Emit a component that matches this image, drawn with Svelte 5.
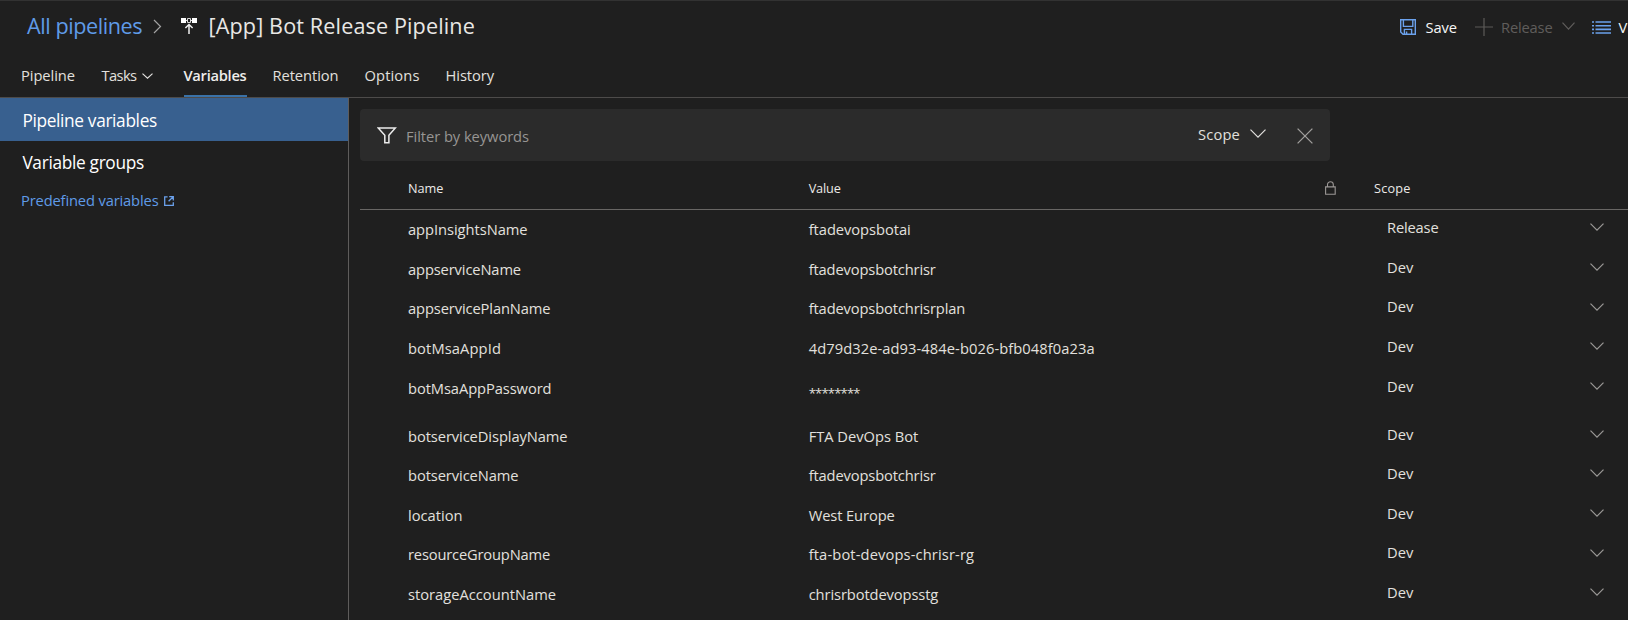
<script>
  const tabs = [
    { label: 'Pipeline', w: 54 },
    { label: 'Tasks', w: 35, menu: true },
    { label: 'Variables', w: 63, active: true },
    { label: 'Retention', w: 66 },
    { label: 'Options', w: 55 },
    { label: 'History', w: 48.5 }
  ];

  const rows = [
    { name: 'appInsightsName', nw: 119.5, value: 'ftadevopsbotai', vw: 102, scope: 'Release', sw: 51.5, h: 40, c: 0 },
    { name: 'appserviceName', nw: 113, value: 'ftadevopsbotchrisr', vw: 127, scope: 'Dev', sw: 26.5, h: 39, c: 0 },
    { name: 'appservicePlanName', nw: 142.5, value: 'ftadevopsbotchrisrplan', vw: 156.5, scope: 'Dev', sw: 26.5, h: 40, c: 1 },
    { name: 'botMsaAppId', nw: 93, value: '4d79d32e-ad93-484e-b026-bfb048f0a23a', vw: 286, scope: 'Dev', sw: 26.5, h: 40, c: 0 },
    { name: 'botMsaAppPassword', nw: 143.5, value: '********', vw: 51, scope: 'Dev', sw: 26.5, h: 48, c: 0, secret: true },
    { name: 'botserviceDisplayName', nw: 159.5, value: 'FTA DevOps Bot', vw: 109.5, scope: 'Dev', sw: 26.5, h: 39, c: 0 },
    { name: 'botserviceName', nw: 110.5, value: 'ftadevopsbotchrisr', vw: 127, scope: 'Dev', sw: 26.5, h: 40, c: 0 },
    { name: 'location', nw: 54.5, value: 'West Europe', vw: 86, scope: 'Dev', sw: 26.5, h: 39, c: 0 },
    { name: 'resourceGroupName', nw: 142, value: 'fta-bot-devops-chrisr-rg', vw: 165.5, scope: 'Dev', sw: 26.5, h: 40, c: 1 },
    { name: 'storageAccountName', nw: 148, value: 'chrisrbotdevopsstg', vw: 129.5, scope: 'Dev', sw: 26.5, h: 40, c: 0 }
  ];

  // Tracks the label so that it fills the given width.
  function fit(node, width) {
    const natural = node.getBoundingClientRect().width;
    node.style.letterSpacing = `${(width - natural) / node.textContent.length}px`;
  }
</script>

{#snippet chevron(w, h, cls)}
  <svg class={cls} width={w} height={h} viewBox="0 0 {w} {h}" fill="none" stroke="currentColor" stroke-width="1.2">
    <path d="M.5 .6 L{w / 2} {h - 0.9} L{w - 0.5} .6" />
  </svg>
{/snippet}

<div class="page">
  <header>
    <div class="crumbs">
      <a class="t" use:fit={115}>All pipelines</a>
      <svg class="sep" width="9" height="15" viewBox="0 0 9 15" fill="none" stroke="#a3a3a3" stroke-width="1.2"><path d="M1 1 L7.5 7.5 L1 14" /></svg>
      <svg class="rel" width="16" height="16" viewBox="0 0 16 16" fill="none">
        <path d="M0 0h5v5H0zM11 0h5v5h-5z" fill="#fff" />
        <path d="M6.5 .5h3v4h-3z" stroke="#dcdcdc" />
        <path d="M5 2.5h1.5M9.5 2.5H11" stroke="#dcdcdc" />
        <path d="M8 6.4V16M4.4 10 L8 6.5 L11.6 10" stroke="#f0f0f0" stroke-width="1.5" />
      </svg>
      <h1 class="t" use:fit={266.5}>[App] Bot Release Pipeline</h1>
    </div>
    <div class="actions">
      <svg class="save" width="16" height="16" viewBox="0 0 16 16" fill="none" stroke="#6ba1ec" stroke-width="1.4">
        <path d="M.7 .7H15.3V15.3H3L.7 13zM3.4 .7V7.4H12.8V.7M4.4 15V10.4H11.6V15M6.6 12.4V15" />
      </svg>
      <span class="t" use:fit={31.5}>Save</span>
      <svg class="plus" width="18" height="18" viewBox="0 0 18 18" stroke="#5c5a58" stroke-width="1.2"><path d="M9 0V18M0 9H18" /></svg>
      <span class="t off" use:fit={51.5}>Release</span>
      {@render chevron(13, 8, 'relchev')}
      <svg class="list" width="19" height="13" viewBox="0 0 19 13" stroke="#6ba1ec" stroke-width="1.6">
        <path d="M0 1H2M3.5 1H19M0 4.7H2M3.5 4.7H19M0 8.4H2M3.5 8.4H19M0 12H2M3.5 12H19" />
      </svg>
      <span class="t">View</span>
    </div>
  </header>

  <nav>
    {#each tabs as tab}
      <div class="tab" class:active={tab.active}>
        <span class="t" use:fit={tab.w}>{tab.label}</span>
        {#if tab.menu}{@render chevron(11, 6, 'tabchev')}{/if}
      </div>
    {/each}
  </nav>

  <div class="body">
    <aside>
      <div class="item selected"><span class="t" use:fit={134.5}>Pipeline variables</span></div>
      <div class="item"><span class="t" use:fit={121.5}>Variable groups</span></div>
      <div class="link">
        <a class="t" use:fit={137.5}>Predefined variables</a>
        <svg width="10" height="10" viewBox="0 0 10 10" fill="none" stroke="#6ba1ec" stroke-width="1.3">
          <path d="M3.6 .8H.7V9.3H9.3V6.2M5.2 .7H9.3V4.6M9.2 .8L4.6 5.2" />
        </svg>
      </div>
    </aside>

    <main>
      <div class="filter">
        <svg class="funnel" width="20" height="17" viewBox="0 0 20 17" fill="none" stroke="#ececec" stroke-width="1.5"><path d="M1.2 .9H18.3L11.9 8.2V15.8H7.8V8.2Z" /></svg>
        <span class="t hint" use:fit={123}>Filter by keywords</span>
        <span class="t scope" use:fit={42}>Scope</span>
        {@render chevron(16, 9, 'scopechev')}
        <svg class="close" width="16" height="16" viewBox="0 0 16 16" stroke="#a19f9d" stroke-width="1.3"><path d="M.6 .6L15.4 15.4M15.4 .6L.6 15.4" /></svg>
      </div>

      <div class="grid head">
        <div class="name"><span class="t" use:fit={35.5}>Name</span></div>
        <div class="value"><span class="t" use:fit={32}>Value</span></div>
        <svg class="lock" width="11" height="14" viewBox="0 0 11 14" fill="none" stroke="#9b9795" stroke-width="1.1"><path d="M.6 5.9H10.2V13.2H.6zM2.5 5.9V3.6A2.9 2.9 0 0 1 8.3 3.6V5.9" /></svg>
        <div><span class="t" use:fit={36.5}>Scope</span></div>
      </div>

      {#each rows as r}
        <div class="grid row" style="height: {r.h}px">
          <div class="name"><span class="t" use:fit={r.nw}>{r.name}</span></div>
          <div class="value" class:secret={r.secret}><span class="t" use:fit={r.vw}>{r.value}</span></div>
          <div></div>
          <div class="scopecell">
            <span class="t" use:fit={r.sw}>{r.scope}</span>
            <div class="arrow" style="padding-top: {6.4 + r.c}px">{@render chevron(14, 8, 'rowchev')}</div>
          </div>
        </div>
      {/each}
    </main>
  </div>
</div>

<style>
  :global(body) {
    background: #1f1f1f;
    overflow: hidden;
  }
  .page {
    box-sizing: border-box;
    width: 1628px;
    height: 620px;
    overflow: hidden;
    background: #1f1f1f;
    border-top: 1px solid #323232;
    color: #e2e0de;
    font-family: 'Open Sans', sans-serif;
    font-size: 14.7px;
    line-height: 20px;
    display: flex;
    flex-direction: column;
  }
  .t {
    white-space: nowrap;
    display: inline-block;
    flex: none;
  }
  svg {
    display: block;
    flex: none;
  }
  header {
    display: flex;
    height: 58px;
    flex: none;
  }
  .crumbs {
    display: flex;
    width: 1400px;
    flex: none;
    padding-left: 27px;
    box-sizing: border-box;
    font-size: 21.6px;
    line-height: 30px;
    padding-top: 10px;
  }
  .crumbs a {
    color: #5f9be8;
  }
  h1 {
    margin: 0 0 0 11.5px;
    font-size: 21.6px;
    font-weight: 400;
    color: #e9e7e5;
  }
  .sep {
    margin: 8px 0 0 11px;
  }
  .rel {
    margin: 7px 0 0 19px;
  }
  .actions {
    display: flex;
    flex: none;
    padding-top: 16px;
    color: #f6f6f6;
  }
  .save {
    margin: 2px 9.5px 0 0;
  }
  .plus {
    margin: 1px 8px 0 18px;
  }
  .off {
    color: #5f5d5b;
  }
  .actions :global(.relchev) {
    color: #5f5d5b;
    margin: 5px 17px 0 9px;
  }
  .list {
    margin: 3.5px 8px 0 0;
  }
  nav {
    display: flex;
    gap: 26px;
    box-sizing: border-box;
    height: 39px;
    flex: none;
    padding-left: 21px;
    border-bottom: 1px solid #4d4b4a;
  }
  .tab {
    display: flex;
    box-sizing: border-box;
    height: 38px;
    padding-top: 6px;
  }
  .tab:nth-child(2) {
    margin-left: 0.5px;
  }
  .tab:nth-child(3) {
    margin-left: 5px;
  }
  .active {
    font-weight: 600;
    color: #efedeb;
    border-bottom: 2px solid #3a72a8;
  }
  .tab :global(.tabchev) {
    margin: 8px 0 0 5px;
  }
  .body {
    display: flex;
    flex: 1;
    min-height: 0;
  }
  aside {
    box-sizing: border-box;
    width: 349px;
    flex: none;
    border-right: 1px solid #5e5c5b;
  }
  .item {
    box-sizing: border-box;
    height: 43px;
    padding: 11px 0 0 22.4px;
    font-size: 17.3px;
    line-height: 24px;
    color: #fff;
  }
  .item + .item {
    padding-top: 10px;
  }
  .selected {
    background: #38608f;
  }
  .link {
    display: flex;
    padding: 6px 0 0 21px;
    color: #5f9be8;
  }
  .link svg {
    margin: 6px 0 0 5px;
  }
  main {
    padding: 11px 0 0 11px;
    width: 1268px;
    flex: none;
  }
  .filter {
    display: flex;
    box-sizing: border-box;
    width: 970px;
    height: 52px;
    border-radius: 4px;
    background: #2b2b2b;
    padding: 17px 17.5px 0 17px;
  }
  .funnel {
    margin: 0.5px 9px 0 0;
  }
  .hint {
    color: #979593;
  }
  .scope {
    margin: -2px 0 0 auto;
  }
  .filter :global(.scopechev) {
    margin: 3px 30.5px 0 10px;
  }
  .close {
    margin-top: 1.5px;
  }
  .grid {
    display: grid;
    grid-template-columns: 448px 516.5px 49.5px 254px;
    box-sizing: border-box;
  }
  .head {
    height: 49px;
    border-bottom: 1px solid #686664;
    font-size: 12.7px;
    padding-top: 17px;
    color: #eceae8;
  }
  .name {
    padding-left: 48px;
  }
  .value {
    padding-left: 0.7px;
  }
  .lock {
    margin-top: 3px;
  }
  .row .name,
  .row .value {
    padding-top: 9px;
  }
  .row .value.secret {
    padding-top: 14px;
    font-size: 13px;
  }
  .scopecell {
    display: flex;
    padding: 7px 24.5px 0 13px;
  }
  .arrow {
    margin-left: auto;
    color: #9b9997;
  }
</style>
